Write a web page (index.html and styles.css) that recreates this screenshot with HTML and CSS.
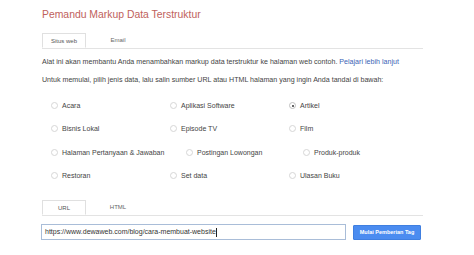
FILE: index.html
```html
<!DOCTYPE html>
<html lang="id">
<head>
<meta charset="utf-8">
<title>Pemandu Markup Data Terstruktur</title>
<link rel="stylesheet" href="styles.css">
</head>
<body>
<div class="page">
  <h1 class="title">Pemandu Markup Data Terstruktur</h1>
  <div class="tabs top-tabs">
    <div class="tab active">Situs web</div>
    <div class="tab">Email</div>
  </div>
  <p class="intro">Alat ini akan membantu Anda menambahkan markup data terstruktur ke halaman web contoh. <a class="link" href="#">Pelajari lebih lanjut</a></p>
  <p class="intro second">Untuk memulai, pilih jenis data, lalu salin sumber URL atau HTML halaman yang ingin Anda tandai di bawah:</p>
  <div class="types">
    <div class="row">
      <label class="opt"><span class="radio"></span>Acara</label>
      <label class="opt"><span class="radio"></span>Aplikasi Software</label>
      <label class="opt"><span class="radio checked"></span>Artikel</label>
    </div>
    <div class="row">
      <label class="opt"><span class="radio"></span>Bisnis Lokal</label>
      <label class="opt"><span class="radio"></span>Episode TV</label>
      <label class="opt"><span class="radio"></span>Film</label>
    </div>
    <div class="row shifted">
      <label class="opt"><span class="radio"></span>Halaman Pertanyaan &amp; Jawaban</label>
      <label class="opt"><span class="radio"></span>Postingan Lowongan</label>
      <label class="opt"><span class="radio"></span>Produk-produk</label>
    </div>
    <div class="row">
      <label class="opt"><span class="radio"></span>Restoran</label>
      <label class="opt"><span class="radio"></span>Set data</label>
      <label class="opt"><span class="radio"></span>Ulasan Buku</label>
    </div>
  </div>
  <div class="tabs bottom-tabs">
    <div class="tab active">URL</div>
    <div class="tab">HTML</div>
  </div>
  <div class="source">
    <div class="url-input">https://www.dewaweb.com/blog/cara-membuat-website<span class="caret"></span></div>
    <button class="start">Mulai Pemberian Tag</button>
  </div>
</div>
</body>
</html>
```
FILE: styles.css
```css
html, body {
  margin: 0;
  padding: 0;
  background: #ffffff;
}
body {
  font-family: "Liberation Sans", Arial, sans-serif;
  color: #444444;
}
.page {
  width: 381px;
  padding: 8px 0 0 42px;
}
.title {
  margin: 0;
  font-size: 10.4px;
  line-height: 13px;
  font-weight: normal;
  color: #c0615c;
}
.tabs {
  display: flex;
  border-bottom: 1px solid #e3e3e3;
  height: 15px;
}
.top-tabs {
  margin-top: 12px;
}
.tab {
  width: 44px;
  height: 15px;
  box-sizing: border-box;
  font-size: 6px;
  line-height: 14px;
  text-align: center;
  color: #666;
  margin-right: 10px;
}
.tab.active {
  border: 1px solid #e0e0e0;
  border-bottom: 1px solid #ffffff;
  background: #fff;
  color: #555;
}
.intro {
  margin: 9px 0 0 0;
  font-size: 7.1px;
  line-height: 9px;
}
.intro.second {
  margin-top: 9px;
}
.link {
  color: #3b63b5;
  text-decoration: none;
}
.types {
  margin-top: 9px;
  padding-left: 10px;
}
.row {
  display: flex;
  height: 23.3px;
  align-items: center;
}
.opt {
  display: flex;
  align-items: center;
  width: 119px;
  font-size: 7px;
  color: #444;
}
.row.shifted .opt:nth-child(1) { width: 135px; }
.row.shifted .opt:nth-child(2) { width: 117px; }
.radio {
  width: 7px;
  height: 7px;
  border: 1px solid #d6d6d6;
  border-radius: 50%;
  box-sizing: border-box;
  margin-right: 4px;
  margin-left: -1px;
  position: relative;
  background: #fff;
}
.radio.checked {
  border-color: #c0c0c0;
}
.radio.checked::after {
  content: "";
  position: absolute;
  left: 1.5px;
  top: 1.5px;
  width: 2px;
  height: 2px;
  border-radius: 50%;
  background: #333;
}
.bottom-tabs {
  margin-top: 13px;
}
.source {
  display: flex;
  align-items: center;
  margin-top: 8px;
}
.url-input {
  width: 305px;
  height: 16px;
  box-sizing: border-box;
  margin-left: -1px;
  border: 1px solid #a9bdd8;
  font-size: 7px;
  line-height: 14px;
  padding-left: 3px;
  color: #333;
  display: flex;
  align-items: center;
}
.caret {
  display: inline-block;
  width: 1px;
  height: 9px;
  background: #222;
}
.start {
  margin-left: 7px;
  width: 68px;
  height: 15px;
  border: 1px solid #3f7fe0;
  background: #4b8cf0;
  color: #fff;
  font-family: "Liberation Sans", Arial, sans-serif;
  font-weight: bold;
  font-size: 5.5px;
  padding: 0;
  border-radius: 1px;
}
```
